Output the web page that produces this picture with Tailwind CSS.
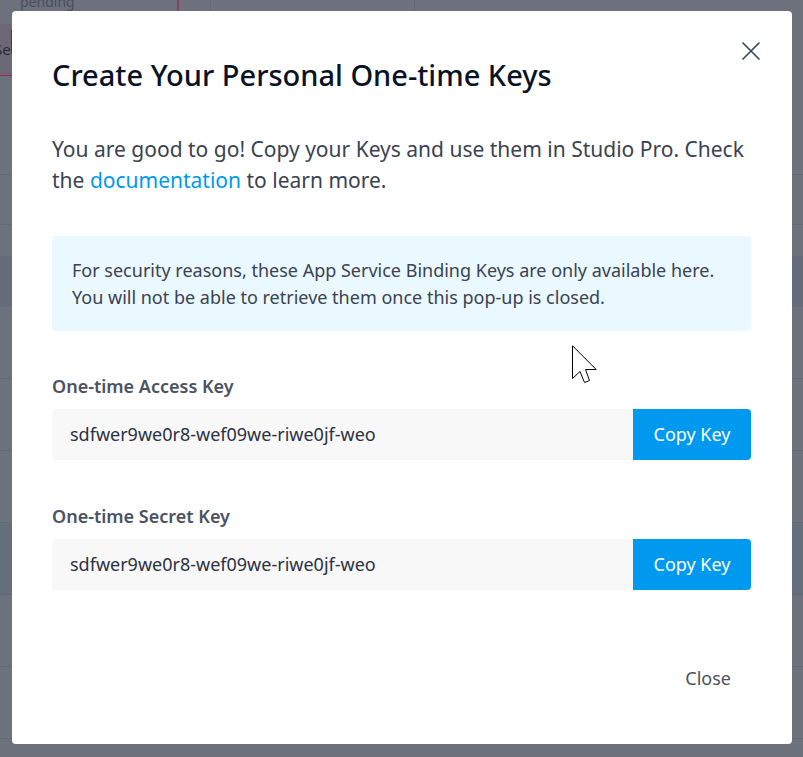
<!DOCTYPE html>
<html lang="en">
<head>
<meta charset="utf-8">
<meta name="viewport" content="width=device-width, initial-scale=1">
<title>Create Your Personal One-time Keys</title>
<script src="https://cdn.jsdelivr.net/npm/@tailwindcss/browser@4"></script>
</head>
<body class="relative min-h-screen overflow-hidden bg-[#6c717c] font-['Noto_Sans',sans-serif] text-[#3b4251]">
  <!-- Dimmed page behind the dialog -->
  <div class="absolute inset-0 flex flex-col" aria-hidden="true">
    <div class="flex h-[76px] shrink-0">
      <div class="flex w-[179px] flex-col border-r-2 border-[#8f3d55]">
        <div class="flex h-6 items-start pl-5"><span class="-mt-2 text-sm leading-5 text-[#494e5b]">pending</span></div>
        <div class="flex grow items-center border-b border-[#8f2f4a] bg-[#6d6876]"><span class="-ml-1.5 text-[15px] text-[#272c3b]">Se</span><span class="mb-4 h-6 w-px bg-[#3b3f4e]"></span></div>
      </div>
      <div class="w-8 border-r border-[#646975]"></div>
      <div class="w-[204px] border-r border-[#646975]"></div>
    </div>
    <div class="h-[99px] shrink-0 border-b border-[#646975]"></div>
    <div class="h-[50px] shrink-0 border-b border-[#646975]"></div>
    <div class="h-[31px] shrink-0"></div>
    <div class="h-[51px] shrink-0 bg-[#666c79]"></div>
    <div class="h-[72px] shrink-0 border-b border-[#646975]"></div>
    <div class="h-[72px] shrink-0 border-b border-[#646975]"></div>
    <div class="h-[72px] shrink-0 border-b border-[#606775]"></div>
    <div class="h-[72px] shrink-0 border-b border-[#606775] bg-[#656e7b]"></div>
    <div class="h-[72px] shrink-0 border-b border-[#646975]"></div>
    <div class="h-[72px] shrink-0 border-b border-[#646975]"></div>
  </div>

  <div class="relative pt-[11px] pr-[11px] pb-3 pl-3">
    <main role="dialog" aria-modal="true" aria-labelledby="title" class="relative rounded bg-white pr-[41px] pl-10 pt-11 pb-12">
      <button type="button" aria-label="Close dialog" class="absolute top-7 right-[29px] flex size-6 items-center justify-center">
        <svg class="size-5" viewBox="0 0 20 20" fill="none" stroke="#3f4656" stroke-width="1.7" stroke-linecap="round"><path d="M2 2 18 18M18 2 2 18"/></svg>
      </button>
      <h1 id="title" class="text-[29px] leading-10 font-medium text-[#0a1325]">Create Your Personal One-time Keys</h1>
      <p class="mt-[39px] text-[21px] leading-[31px]">You are good to go! Copy your Keys and use them in Studio Pro. Check the <a href="#" class="text-[#0099f0]">documentation</a> to learn more.</p>
      <p class="mt-10 rounded bg-[#eaf8ff] px-5 pt-[21px] pb-5 text-[18px] leading-[27px]">For security reasons, these App Service Binding Keys are only available here. You will not be able to retrieve them once this pop-up is closed.</p>
      <label for="access" class="mt-[43px] block text-[18px] leading-6 font-semibold text-[#4c5262]">One-time Access Key</label>
      <div class="mt-[11px] flex h-[51px] overflow-hidden rounded">
        <input id="access" readonly value="sdfwer9we0r8-wef09we-riwe0jf-weo" class="min-w-0 grow bg-[#f8f8f8] px-[18px] text-[18px] text-[#2b3142] outline-none">
        <button type="button" class="w-[118px] shrink-0 bg-[#0099f0] text-[18px] text-white">Copy Key</button>
      </div>
      <label for="secret" class="mt-11 block text-[18px] leading-6 font-semibold text-[#4c5262]">One-time Secret Key</label>
      <div class="mt-[11px] flex h-[51px] overflow-hidden rounded">
        <input id="secret" readonly value="sdfwer9we0r8-wef09we-riwe0jf-weo" class="min-w-0 grow bg-[#f8f8f8] px-[18px] text-[18px] text-[#2b3142] outline-none">
        <button type="button" class="w-[118px] shrink-0 bg-[#0099f0] text-[18px] text-white">Copy Key</button>
      </div>
      <div class="mt-[70px] flex justify-end pr-5">
        <button type="button" class="h-9 text-[18px] text-[#4c5262]">Close</button>
      </div>
    </main>
  </div>

  <!-- Mouse pointer -->
  <svg class="pointer-events-none absolute top-[345px] left-[572px] h-[39px] w-[26px]" viewBox="0 0 26 39" fill="#fff" stroke="#000" stroke-width="1" aria-hidden="true"><path d="M.5.8V33.500L8 26.500L12.500 37.500L17.500 35.500L13.500 24.500H24.200Z"/></svg>
</body>
</html>
